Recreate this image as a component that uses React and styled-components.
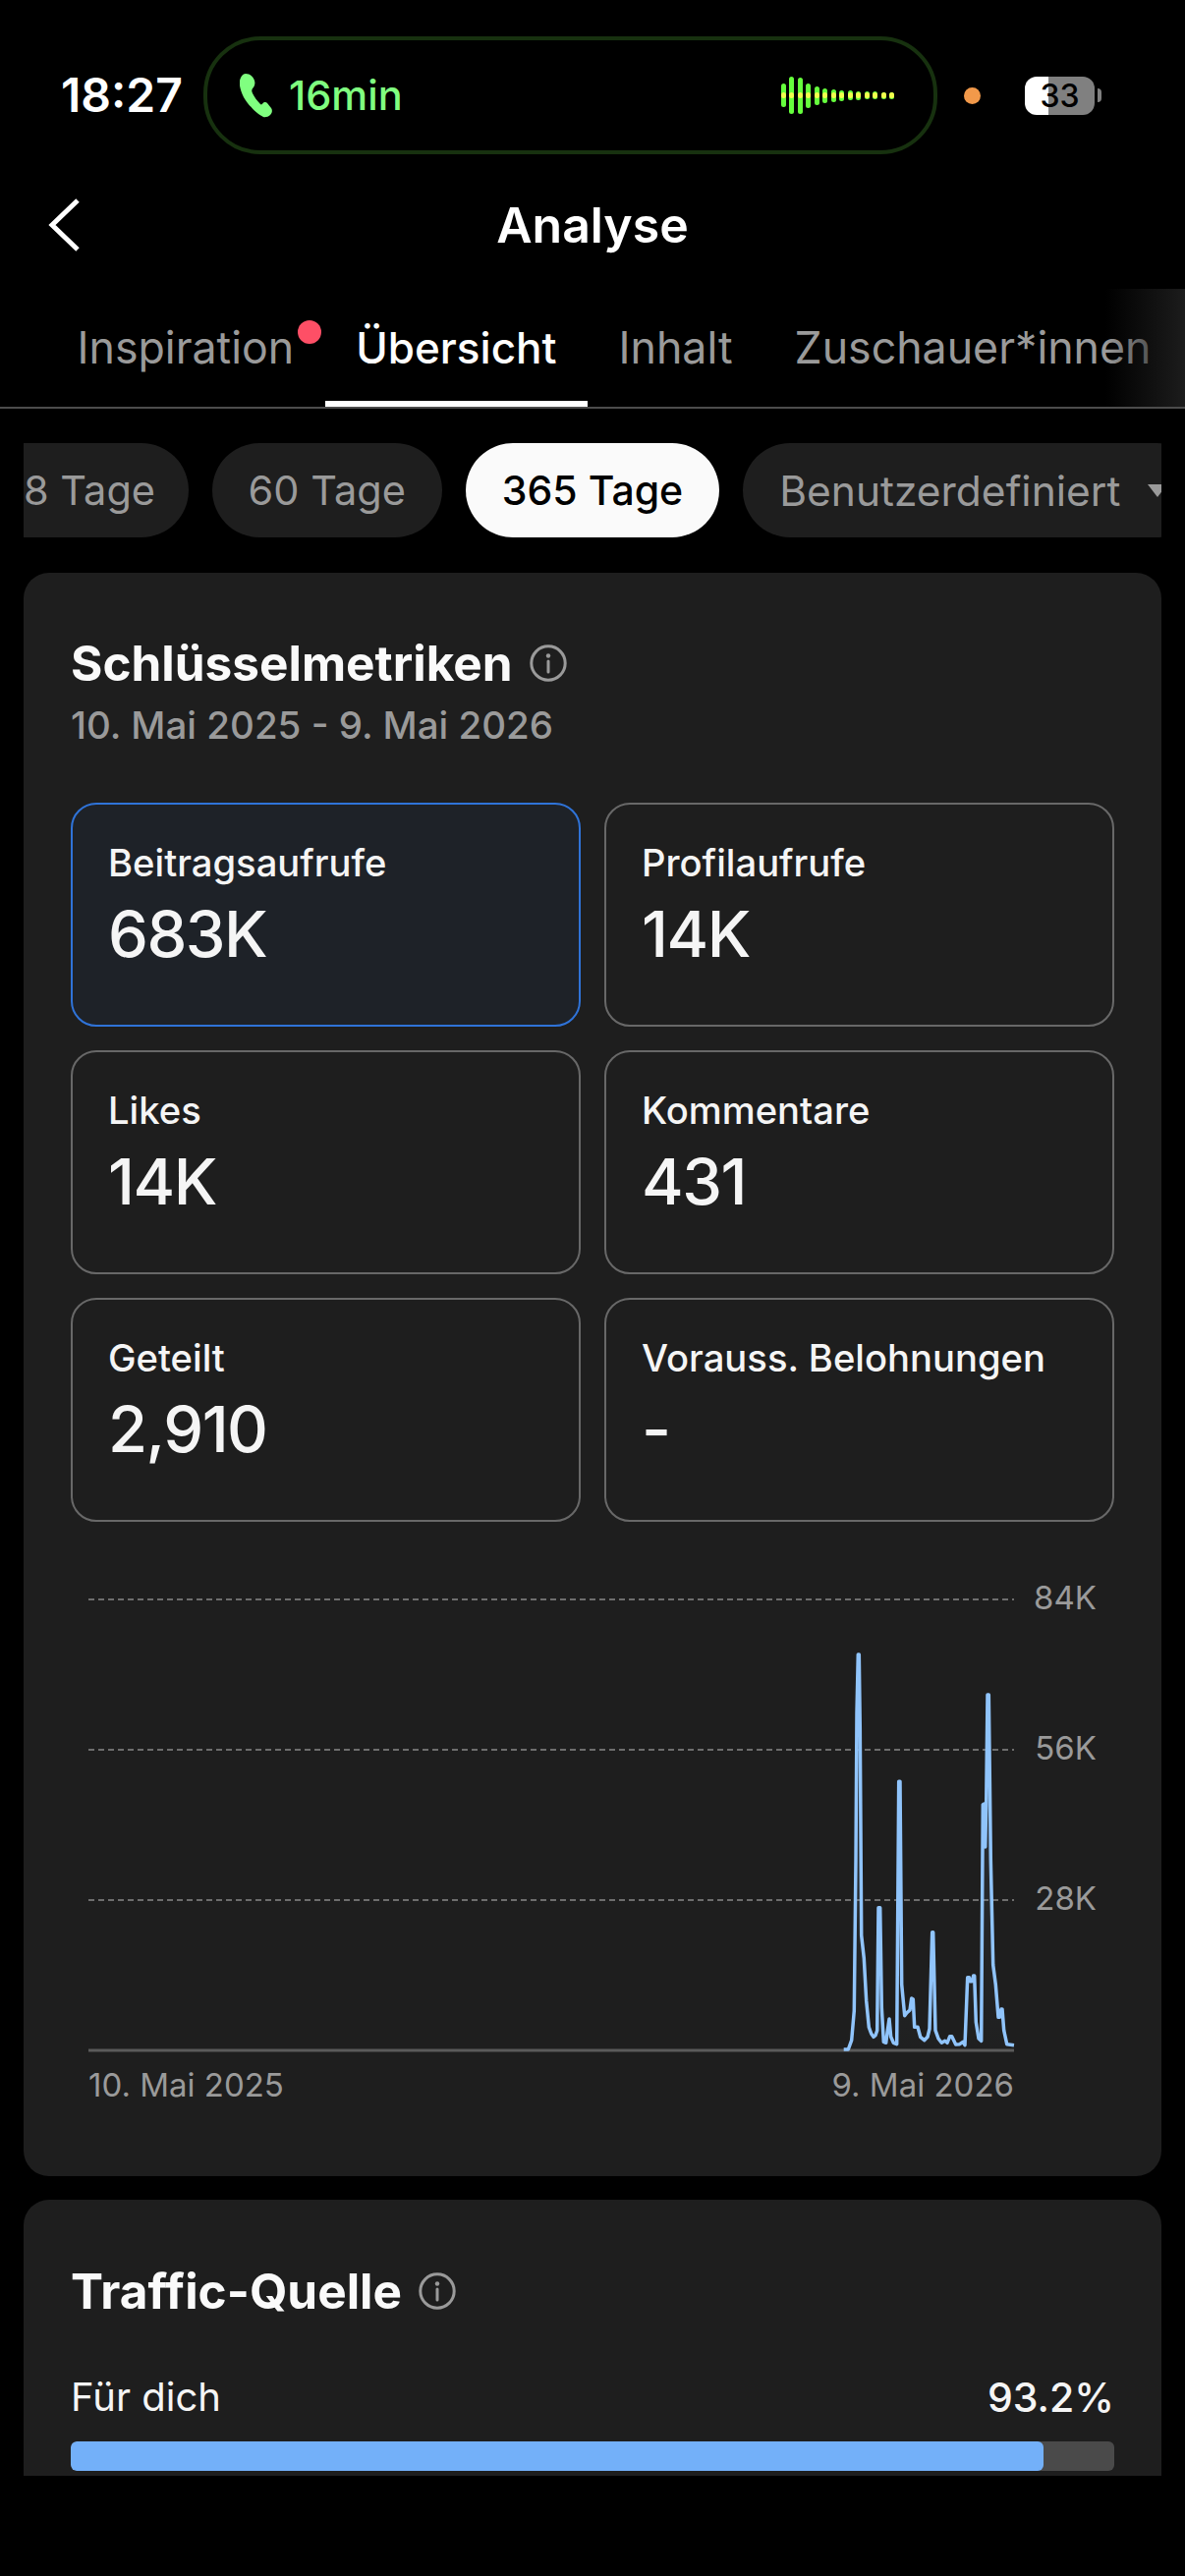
import styled, { createGlobalStyle } from 'styled-components'

const GlobalStyle = createGlobalStyle`
  html, body { margin: 0; padding: 0; background: #000; }
  * { box-sizing: border-box; }
`

const bars = [24, 38, 37, 25, 19, 15, 13, 11, 10, 9, 8, 8, 7, 7]

const tabs = [
  { label: 'Inspiration', dot: true },
  { label: 'Übersicht', active: true },
  { label: 'Inhalt' },
  { label: 'Zuschauer*innen' },
]

const metrics = [
  { label: 'Beitragsaufrufe', value: '683K', selected: true },
  { label: 'Profilaufrufe', value: '14K' },
  { label: 'Likes', value: '14K' },
  { label: 'Kommentare', value: '431' },
  { label: 'Geteilt', value: '2,910' },
  { label: 'Vorauss. Belohnungen', value: '-' },
]

// traced from the chart, in 3x pixels starting at (820, 1660)
const trace = [
  [116,1278],[130,1278],[140,1250],[148,1160],[153,700],[156,250],[160,72],[163,72],[166,300],[170,930],
  [178,1000],[185,1130],[193,1210],[200,1230],[207,1240],[213,1235],[218,1220],[222,845],[227,845],[232,1150],
  [238,1255],[245,1258],[250,1220],[255,1185],[260,1240],[268,1258],[278,1262],[284,460],[288,460],[293,1080],
  [302,1175],[310,1165],[318,1158],[323,1122],[328,1125],[332,1210],[342,1210],[350,1240],[362,1250],[372,1240],
  [378,1215],[386,920],[389,920],[396,1220],[405,1245],[415,1258],[425,1252],[432,1258],[440,1238],[446,1238],
  [458,1263],[470,1262],[480,1255],[486,1265],[494,1058],[499,1058],[501,1070],[508,1070],[512,1053],[515,1053],
  [520,1195],[528,1245],[536,1252],[541,530],[545,528],[548,660],[551,530],[555,195],[559,195],[565,700],
  [572,1020],[580,1080],[588,1180],[592,1180],[597,1155],[600,1155],[605,1220],[614,1262],[636,1265],
]
const linePoints = trace.map(([x, y]) => `${(820 + x / 3).toFixed(1)},${(1660 + y / 3).toFixed(1)}`).join(' ')
const areaPoints = `858.7,2087 ${linePoints} 1032,2087`

function InfoIcon() {
  return (
    <svg width="38" height="38" viewBox="0 0 38 38" fill="none">
      <circle cx="19" cy="19" r="17.2" stroke="#9a9a9a" strokeWidth="3" />
      <circle cx="19" cy="11.5" r="2.2" fill="#9a9a9a" />
      <path d="M19 17v11" stroke="#9a9a9a" strokeWidth="3" strokeLinecap="round" />
    </svg>
  )
}

function Chart() {
  return (
    <ChartSvg width="1062" height="560" viewBox="72 1600 1062 560">
      <defs>
        <linearGradient id="area" x1="0" y1="0" x2="0" y2="1">
          <stop offset="0" stopColor="#90c4fb" stopOpacity="0.14" />
          <stop offset="1" stopColor="#90c4fb" stopOpacity="0.01" />
        </linearGradient>
      </defs>
      {[1628, 1781, 1934].map((y) => (
        <line key={y} x1="90" x2="1032" y1={y} y2={y} stroke="#6e6e6e" strokeWidth="2" strokeDasharray="6 4" />
      ))}
      <polygon points={areaPoints} fill="url(#area)" />
      <line x1="90" x2="1032" y1="2087" y2="2087" stroke="#5a5a5a" strokeWidth="3" />
      <polyline points={linePoints} fill="none" stroke="#90c4fb" strokeWidth="3.5" strokeLinejoin="round" />
      <AxisLabel x="1116" y="1638" textAnchor="end">84K</AxisLabel>
      <AxisLabel x="1116" y="1791" textAnchor="end">56K</AxisLabel>
      <AxisLabel x="1116" y="1944" textAnchor="end">28K</AxisLabel>
      <AxisLabel x="90" y="2134">10. Mai 2025</AxisLabel>
      <AxisLabel x="1032" y="2134" textAnchor="end">9. Mai 2026</AxisLabel>
    </ChartSvg>
  )
}

export default function App() {
  return (
    <Screen>
      <GlobalStyle />
      <StatusBar>
        <Time>18:27</Time>
        <CallPill>
          <svg width="34" height="45" viewBox="0 0 34 45" fill="#80ff80">
            <path d="M6 0C10 0 14 3 15 7C16 10 15 13 13 15C12 16.5 12 18 13 20C15 24 18 28 21 31C22 32 23 31 24 29.5C25 28.5 27 29 28 30L32 35C33.5 37 33 40 31 42C29 44 26 44.5 24 44C17 41 8 31 4 24C1 18 -1 11 0 7C1 3 3 0 6 0Z" />
          </svg>
          <CallTime>16min</CallTime>
          <Wave>
            {bars.map((h, i) => (
              <WaveBar key={i} style={{ height: h }} />
            ))}
          </Wave>
        </CallPill>
        <OrangeDot />
        <Battery>33</Battery>
        <BatteryNib />
      </StatusBar>

      <NavBar>
        <svg width="36" height="56" viewBox="0 0 36 56" fill="none">
          <path d="M31 3L5 28L31 53" stroke="#fff" strokeWidth="5" />
        </svg>
        <NavTitle>Analyse</NavTitle>
      </NavBar>

      <Tabs>
        {tabs.map((t) => (
          <Tab key={t.label} $active={t.active}>
            {t.label}
            {t.dot && <TabDot />}
          </Tab>
        ))}
        <TabFade />
      </Tabs>

      <Content>
        <Ranges>
          <CutRange>8 Tage</CutRange>
          <Range>60 Tage</Range>
          <Range $active>365 Tage</Range>
          <WideRange>
            Benutzerdefiniert
            <Caret />
          </WideRange>
        </Ranges>

        <Card>
          <TitleRow>
            <CardTitle>Schlüsselmetriken</CardTitle>
            <InfoIcon />
          </TitleRow>
          <DateRange>10. Mai 2025 - 9. Mai 2026</DateRange>
          <MetricGrid>
            {metrics.map((m) => (
              <Metric key={m.label} $selected={m.selected}>
                <MetricLabel>{m.label}</MetricLabel>
                <MetricValue>{m.value}</MetricValue>
              </Metric>
            ))}
          </MetricGrid>
          <Chart />
        </Card>

        <Card $second>
          <TitleRow>
            <CardTitle>Traffic-Quelle</CardTitle>
            <InfoIcon />
          </TitleRow>
          <SourceRow>
            <SourceName>Für dich</SourceName>
            <SourceValue>93.2%</SourceValue>
          </SourceRow>
          <Track>
            <Fill style={{ width: '93.2%' }} />
          </Track>
        </Card>
      </Content>
    </Screen>
  )
}

const Screen = styled.div`
  width: 1206px;
  height: 2622px;
  background: #000;
  color: #fff;
  font-family: Inter, "Liberation Sans", sans-serif;
  overflow: hidden;
`

const StatusBar = styled.div`
  display: flex;
  align-items: center;
  height: 120px;
  margin-top: 37px;
  padding-left: 62px;
`

const Time = styled.div`
  width: 145px;
  font-size: 48px;
  font-weight: 600;
  line-height: 1;
`

const CallPill = styled.div`
  display: flex;
  align-items: center;
  width: 747px;
  height: 120px;
  padding: 0 40px 0 33px;
  border: 4.5px solid #17310f;
  border-radius: 58px;
`

const CallTime = styled.span`
  margin-left: 16px;
  font-size: 41.5px;
  font-weight: 500;
  color: #80ff80;
`

const Wave = styled.div`
  display: flex;
  align-items: center;
  gap: 3.5px;
  margin-left: auto;
`

const WaveBar = styled.span`
  position: relative;
  width: 5px;
  border-radius: 3px;
  background: #66ff3d;

  &::after {
    content: '';
    position: absolute;
    left: 0;
    top: 50%;
    width: 5px;
    height: 6px;
    margin-top: -3px;
    border-radius: 3px;
    background: #f2ff4d;
  }
`

const OrangeDot = styled.span`
  width: 17px;
  height: 17px;
  margin-left: 27px;
  border-radius: 50%;
  background: #f2994a;
`

const Battery = styled.div`
  width: 71px;
  height: 39px;
  margin-left: 45px;
  border-radius: 12px;
  background: linear-gradient(90deg, #fff 34%, #808080 34%);
  color: #000;
  font-size: 32px;
  font-weight: 500;
  line-height: 39px;
  text-align: center;
`

const BatteryNib = styled.span`
  width: 4px;
  height: 14px;
  margin-left: 3px;
  border-radius: 0 4px 4px 0;
  background: #808080;
`

const NavBar = styled.div`
  display: grid;
  grid-template-columns: 1fr auto 1fr;
  align-items: center;
  height: 137px;
  padding: 6px 48px 0;
`

const NavTitle = styled.div`
  font-size: 50px;
  font-weight: 600;
  line-height: 1;
`

const Tabs = styled.div`
  position: relative;
  display: flex;
  height: 122px;
  padding-left: 47px;
  border-bottom: 2px solid #4c4c4c;
  overflow: hidden;
`

const Tab = styled.div`
  position: relative;
  display: flex;
  align-items: center;
  flex: none;
  height: 120px;
  padding: 6px 31.5px 0;
  border-bottom: 6px solid ${(p) => (p.$active ? '#fff' : 'transparent')};
  font-size: ${(p) => (p.$active ? '44px' : '44.7px')};
  font-weight: ${(p) => (p.$active ? 500 : 400)};
  color: ${(p) => (p.$active ? '#fff' : '#9a9a9a')};
`

const TabDot = styled.span`
  position: absolute;
  top: 32px;
  right: 4px;
  width: 24px;
  height: 24px;
  border-radius: 50%;
  background: #fe4f66;
`

const TabFade = styled.div`
  position: absolute;
  top: 0;
  right: 0;
  width: 81px;
  height: 120px;
  background: linear-gradient(90deg, rgba(28, 28, 28, 0), #1c1c1c);
`

const Content = styled.div`
  height: 2104px;
  padding: 35px 24px 0;
  overflow: hidden;
`

const Ranges = styled.div`
  display: flex;
  gap: 24px;
  height: 96px;
  overflow: hidden;
`

const Range = styled.div`
  display: flex;
  align-items: center;
  flex: none;
  height: 96px;
  padding: 0 37px;
  border-radius: 48px;
  background: ${(p) => (p.$active ? '#fafafa' : '#1e1e1e')};
  color: ${(p) => (p.$active ? '#000' : '#9a9a9a')};
  font-size: ${(p) => (p.$active ? '41px' : '41.5px')};
  font-weight: ${(p) => (p.$active ? 500 : 400)};
`

const CutRange = styled(Range)`
  padding: 0 33.5px 0 0;
  border-radius: 0 48px 48px 0;
`

const WideRange = styled(Range)`
  font-size: 42.5px;
`

const Caret = styled.span`
  width: 0;
  height: 0;
  margin-left: 28px;
  border-left: 10px solid transparent;
  border-right: 10px solid transparent;
  border-top: 13px solid #9a9a9a;
`

const Card = styled.div`
  margin-top: ${(p) => (p.$second ? '24px' : '36px')};
  padding: ${(p) => (p.$second ? '65px' : '64px')} 48px ${(p) => (p.$second ? '40px' : '55px')};
  border-radius: 26px;
  background: #1e1e1e;
`

const TitleRow = styled.div`
  display: flex;
  align-items: center;
  gap: 17px;
  height: 56px;
`

const CardTitle = styled.h2`
  margin: 0;
  font-size: 49.5px;
  font-weight: 700;
  line-height: 56px;
  color: #fafafa;
`

const DateRange = styled.div`
  margin-top: 11px;
  font-size: 38.5px;
  font-weight: 500;
  line-height: 48px;
  color: #9a9a9a;
`

const MetricGrid = styled.div`
  display: grid;
  grid-template-columns: 519px 519px;
  grid-auto-rows: 228px;
  column-gap: 24px;
  row-gap: 24px;
  margin-top: 55px;
`

const Metric = styled.div`
  padding: 35px 36px 0;
  border: 2px solid ${(p) => (p.$selected ? '#2f73d8' : '#686868')};
  border-radius: 26px;
  background: ${(p) => (p.$selected ? '#1e2228' : 'transparent')};
`

const MetricLabel = styled.div`
  font-size: 38.2px;
  font-weight: 500;
  line-height: 48px;
  color: #f5f5f5;
`

const MetricValue = styled.div`
  margin-top: 13px;
  font-size: 65px;
  font-weight: 550;
  line-height: 72px;
  letter-spacing: -1.5px;
  color: #f5f5f5;
`

const ChartSvg = styled.svg`
  display: block;
  margin-top: 51px;
`

const AxisLabel = styled.text`
  font-size: 33px;
  fill: #9a9a9a;
`

const SourceRow = styled.div`
  display: flex;
  justify-content: space-between;
  margin-top: 56px;
  line-height: 48px;
`

const SourceName = styled.span`
  font-size: 40px;
  font-weight: 400;
  color: #f5f5f5;
`

const SourceValue = styled.span`
  font-size: 41px;
  font-weight: 500;
  color: #f5f5f5;
`

const Track = styled.div`
  height: 30px;
  margin-top: 21px;
  border-radius: 6px;
  background: #4a4a4a;
  overflow: hidden;
`

const Fill = styled.div`
  height: 100%;
  border-radius: 6px;
  background: #73b0f9;
`
